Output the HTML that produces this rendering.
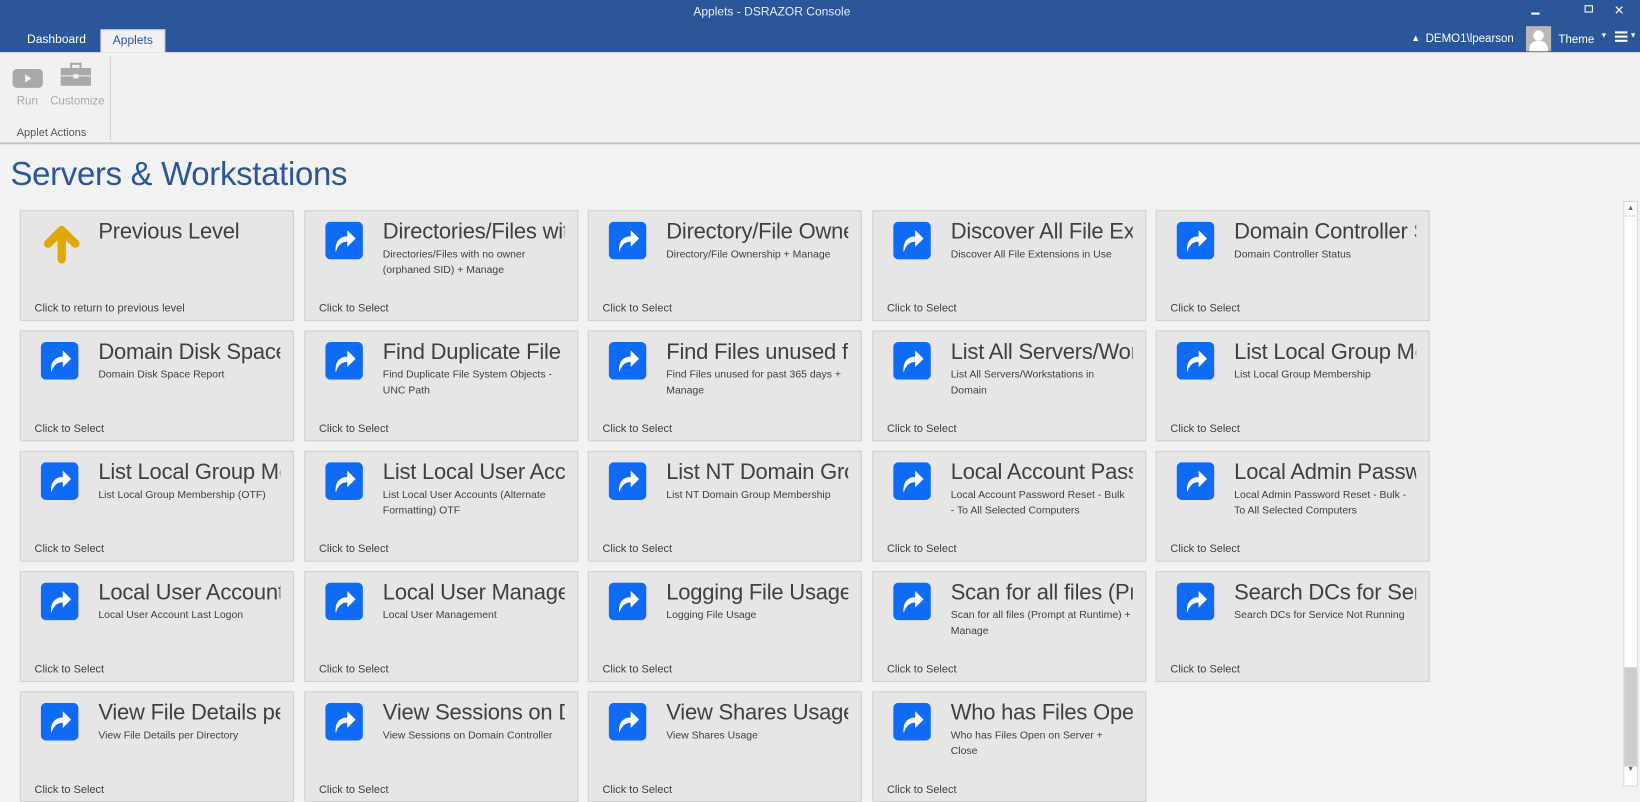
<!DOCTYPE html>
<html><head><meta charset="utf-8"><style>
*{margin:0;padding:0;box-sizing:border-box}
html,body{width:1640px;height:777px;overflow:hidden;background:#f2f2f2;font-family:"Liberation Sans",sans-serif}
#s{position:absolute;left:0;top:0;width:1568px;height:743px;transform:scale(1.04592);transform-origin:0 0;background:#f2f2f2}
.hdr{position:absolute;left:0;top:0;width:1568px;height:50px;background:#2b579a;color:#fff}
.tt{position:absolute;top:6px;left:0;width:1476px;text-align:center;font-size:11.5px;color:#e8eef8}
.tab{position:absolute;top:28px;height:22px;font-size:11.5px;padding-top:4px;text-align:center}
.rib{position:absolute;left:0;top:50px;width:1568px;height:88px;background:#f1f1f1;border-bottom:2px solid #c6c6c6}
.g{color:#a9a9a9;font-size:11px;position:absolute}
h1{position:absolute;left:10px;top:148px;font-weight:normal;font-size:31.5px;color:#2b579a;letter-spacing:-0.3px}
.t{position:absolute;width:262px;height:106px;background:#e6e6e6;border:1px solid #d0d0d0;overflow:hidden}
.t svg{position:absolute;left:19px;top:10px}
.ti{position:absolute;left:74px;top:8px;width:174px;white-space:nowrap;overflow:hidden;font-size:21px;color:#404040;letter-spacing:-0.2px}
.d{position:absolute;left:74px;top:34px;width:172px;font-size:10px;line-height:15px;color:#404040}
.c{position:absolute;left:13px;top:87px;font-size:10.5px;color:#404040}
.sb{position:absolute;left:1552px;top:192px;width:14px;height:560px;background:#fff;border:1px solid #d6d6d6}
</style></head><body><div id="s">
<div class="hdr">
<div class="tt">Applets - DSRAZOR Console</div>
<div style="position:absolute;left:1464px;top:12px;width:8px;height:2px;background:#fff"></div>
<div style="position:absolute;left:1515px;top:5px;width:8px;height:7px;border:1.5px solid #fff"></div>
<div style="position:absolute;left:1543px;top:3px;font-size:12px">&#10005;</div>
<div class="tab" style="left:14px;width:80px;color:#fff">Dashboard</div>
<div class="tab" style="left:96px;width:62px;background:#f1f1f1;color:#2b579a;border:1px solid #d0d0d0;border-bottom:none">Applets</div>
<div style="position:absolute;left:1349px;top:31px;font-size:9px">&#9650;</div>
<div style="position:absolute;left:1363px;top:31px;font-size:11px">DEMO1\lpearson</div>
<div style="position:absolute;left:1459px;top:25px;width:24px;height:24px;background:#b8b8b8;overflow:hidden"><div style="position:absolute;left:7px;top:4px;width:10px;height:10px;border-radius:50%;background:#fff"></div><div style="position:absolute;left:3px;top:14px;width:18px;height:14px;border-radius:8px 8px 0 0;background:#fff"></div></div>
<div style="position:absolute;left:1490px;top:32px;font-size:11px">Theme</div>
<div style="position:absolute;left:1530px;top:31px;font-size:7px">&#9660;</div>
<div style="position:absolute;left:1544px;top:30px;width:12px;height:10px;border-top:2px solid #fff;border-bottom:2px solid #fff"><div style="margin-top:2px;height:2px;background:#fff"></div></div>
<div style="position:absolute;left:1558px;top:31px;font-size:7px">&#9660;</div>
</div>
<div class="rib">
<div style="position:absolute;left:12px;top:16px;width:29px;height:18px;background:#a9a9a9;border-radius:4px"><div style="position:absolute;left:12px;top:5px;border-left:6px solid #f1f1f1;border-top:4px solid transparent;border-bottom:4px solid transparent"></div></div>
<div style="position:absolute;left:58px;top:10px;width:29px;height:22px"><div style="position:absolute;left:9px;top:0;width:11px;height:5px;border:2px solid #a9a9a9;border-bottom:none"></div><div style="position:absolute;left:0;top:5px;width:29px;height:17px;background:#a9a9a9"></div><div style="position:absolute;left:0;top:12px;width:29px;height:1px;background:#f1f1f1"></div><div style="position:absolute;left:12px;top:11px;width:5px;height:4px;background:#f1f1f1"></div></div>
<div class="g" style="left:16px;top:41px">Run</div>
<div class="g" style="left:48px;top:41px">Customize</div>
<div style="position:absolute;left:16px;top:71px;font-size:10.5px;color:#555">Applet Actions</div>
<div style="position:absolute;left:105px;top:4px;width:1px;height:80px;background:#d0d0d0"></div>
</div>
<h1>Servers &amp; Workstations</h1>
<div class="sb"><div style="height:14px;border-bottom:1px solid #d6d6d6;font-size:7px;color:#666;text-align:center;line-height:14px">&#9650;</div><div style="position:absolute;left:0;top:445px;width:12px;height:95px;background:#cdcdcd"></div><div style="position:absolute;left:0;top:538px;width:12px;height:14px;font-size:7px;color:#666;text-align:center;border-top:1px solid #d6d6d6">&#9660;</div></div>
<div id="tiles"></div>
<div class="t" style="left:19px;top:201px"><svg width="40" height="40" viewBox="0 0 40 40"><path d="M20 36 V8 M7 21 L20 8 L33 21" stroke="#e0a800" stroke-width="8" fill="none" stroke-linecap="round" stroke-linejoin="round"/></svg><div class="ti">Previous Level</div><div class="c">Click to return to previous level</div></div>
<script>
var d=[[1,"Directories/Files with no owner (orphaned SID) + Manage"],[2,"Directory/File Ownership + Manage"],[3,"Discover All File Extensions in Use"],[4,"Domain Controller Status"],
[5,"Domain Disk Space Report"],[6,"Find Duplicate File System Objects - UNC Path"],[7,"Find Files unused for past 365 days + Manage"],[8,"List All Servers/Workstations in Domain"],[9,"List Local Group Membership"],
[10,"List Local Group Membership (OTF)"],[11,"List Local User Accounts (Alternate Formatting) OTF"],[12,"List NT Domain Group Membership"],[13,"Local Account Password Reset - Bulk - To All Selected Computers"],[14,"Local Admin Password Reset - Bulk - To All Selected Computers"],
[15,"Local User Account Last Logon"],[16,"Local User Management"],[17,"Logging File Usage"],[18,"Scan for all files (Prompt at Runtime) + Manage"],[19,"Search DCs for Service Not Running"],
[20,"View File Details per Directory"],[21,"View Sessions on Domain Controller"],[22,"View Shares Usage"],[23,"Who has Files Open on Server + Close"]];
var xs=[19,291,562,834,1105],h="";
var ic='<svg width="36" height="36" viewBox="0 0 36 36"><rect width="36" height="36" rx="5" fill="#0f6af5"/><path d="M10 29 C9 20 13 14 21 14 L21 8 L29 16 L21 24 L21 19 C15 19 12 23 10 29 Z" fill="#fff"/></svg>';
d.forEach(function(e){var i=e[0],x=xs[i%5],y=201+115*Math.floor(i/5);
h+='<div class="t" style="left:'+x+'px;top:'+y+'px">'+ic+'<div class="ti">'+e[1]+'</div><div class="d">'+e[1]+'</div><div class="c">Click to Select</div></div>';});
document.getElementById('tiles').innerHTML=h;
</script>
</div></body></html>
